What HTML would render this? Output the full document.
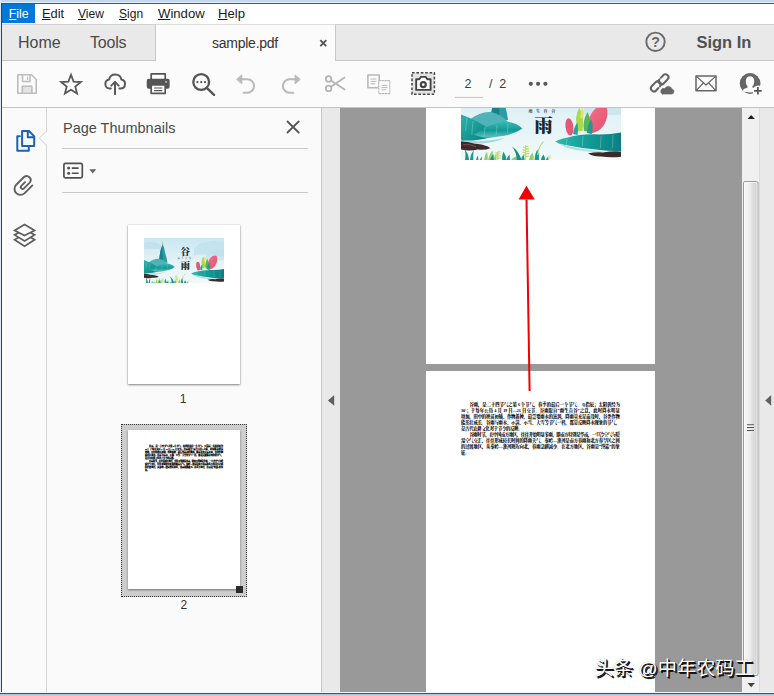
<!DOCTYPE html>
<html lang="en">
<head>
<meta charset="utf-8">
<title>sample.pdf - Adobe Acrobat Reader DC</title>
<style>
*{box-sizing:border-box;margin:0;padding:0}
html,body{width:774px;height:696px;overflow:hidden;background:#fff}
body{position:relative;font-family:"Liberation Sans","Noto Sans CJK SC",sans-serif;color:#333}
.abs{position:absolute}
#win-top{left:0;top:0;width:774px;height:3px;background:linear-gradient(#bfd7ef 0,#c3daf1 1.8px,#e3eef8 2px,#e8f1f9 3px)}
#win-topline{left:1px;top:3px;width:773px;height:1px;background:#4d545c}
#win-left{left:0;top:0;width:1px;height:696px;background:#dfe8f3}
#win-leftline{left:1px;top:3px;width:1px;height:691px;background:#3f4246}
#win-bottom{left:0;top:692px;width:774px;height:4px;background:linear-gradient(#f2f5f9 0,#f2f5f9 1px,#46505f 1px,#46505f 2px,#a9bfd8 2px,#c3d4e6 4px)}
/* menu */
#menubar{left:2px;top:4px;width:772px;height:20px;background:#fff}
.mi{position:absolute;top:-0.5px;height:20px;line-height:20px;font-size:13.4px;transform-origin:0 50%;color:#1a1a1a;white-space:nowrap}
.mi u{text-decoration:underline;text-underline-offset:1px}
#m-file{left:0;width:36px;color:#fff;padding-left:7.4px}
#m-file-bg{left:2px;top:4px;width:33px;height:19px;background:#0078d7}
/* tab bar */
#tabbar{left:2px;top:24px;width:772px;height:37px;background:#e9e9e9;border-bottom:1px solid #c6c6c6;box-shadow:inset 0 1px 0 #d2d2d2}
.tb{position:absolute;font-size:16px;color:#4a4a4a;white-space:nowrap;line-height:18px}
#tab-doc{left:153px;top:0;width:181px;height:38px;background:#fbfbfb;border-left:1px solid #c8c8c8;border-right:1px solid #c8c8c8;box-shadow:inset 0 1px 0 #dedede}
/* toolbar */
#toolbar{left:2px;top:61px;width:772px;height:47px;z-index:3;background:#fbfbfb;border-bottom:1px solid #c4c4c4}
/* left nav */
#navstrip{left:2px;top:107px;width:45px;height:585px;background:#fafafa;border-right:1px solid #d4d4d4}
#panel{left:47px;top:107px;width:275px;height:585px;background:#fafafa;border-right:1px solid #c8c8c8}
#divider{left:322px;top:107px;width:18px;height:585px;background:#e9e9e9}
#doc{left:340px;top:107px;width:402px;height:585px;background:#999}
#vscroll{left:742px;top:107px;width:18px;height:585px;background:#f0f0f0;border-right:1px solid #dcdcdc}
#rightpane{left:760px;top:107px;width:14px;height:585px;background:#e9e9e9}
.page{position:absolute;background:#fff}
.ptext{width:158.6px;font-family:"Liberation Serif","Noto Serif CJK SC",serif;font-size:4.3px;letter-spacing:-.2px;color:#000;font-weight:900}
.ptext .l{height:6.025px;line-height:6.025px;white-space:nowrap;text-align:justify;text-align-last:justify;text-justify:inter-character;overflow:visible}
.ptext .l.i{padding-left:8.4px;letter-spacing:-.4px}
.ptext .l.e{text-align-last:left}
#t2text{transform:scale(.4913);transform-origin:0 0;font-weight:900;-webkit-text-stroke:.3px #000}
#wm{left:594.6px;top:656.6px;font-family:"Liberation Sans","Noto Sans CJK SC",sans-serif;font-size:19.2px;line-height:24px;color:#fff;white-space:nowrap;text-shadow:1px 1px 0 #111,1.7px 1.7px .6px #1a1a1a,0 0 1px rgba(0,0,0,.35)}
</style>
</head>
<body>
<svg width="0" height="0" style="position:absolute">
  <defs>
    <linearGradient id="sky" x1="0" y1="0" x2="0" y2="1"><stop offset="0" stop-color="#c9e6f1"/><stop offset=".5" stop-color="#e2f2f6"/><stop offset="1" stop-color="#f1f9f9"/></linearGradient>
    <linearGradient id="teal1" x1="0" y1="0" x2="1" y2="1"><stop offset="0" stop-color="#2fb3ad"/><stop offset=".6" stop-color="#14958f"/><stop offset="1" stop-color="#0d7f80"/></linearGradient>
    <linearGradient id="teal2" x1="0" y1="0" x2="0" y2="1"><stop offset="0" stop-color="#35bdb2"/><stop offset=".55" stop-color="#119a96"/><stop offset="1" stop-color="#5fc5c4"/></linearGradient>
    <linearGradient id="teal3" x1="0" y1="0" x2="1" y2="0"><stop offset="0" stop-color="#2db9ae"/><stop offset=".5" stop-color="#139b95"/><stop offset="1" stop-color="#0b7f82"/></linearGradient>
    <linearGradient id="pink" x1="0" y1="0" x2="1" y2="1"><stop offset="0" stop-color="#f4708a"/><stop offset="1" stop-color="#e2506e"/></linearGradient>
    <symbol id="banner" viewBox="0 0 160 89" preserveAspectRatio="none">
      <rect width="160" height="89" fill="url(#sky)"/>
      <!-- distant mountains -->
      <path d="M0 10Q10 5 18 9Q26 6 32 14L36 22H0Z" fill="#bfdfeb" opacity=".8"/>
      <path d="M100 22Q112 6 124 10Q136 2 148 8Q155 5 160 9V38Q130 30 100 34Z" fill="#b9deea" opacity=".6"/>
      <path d="M128 30Q140 20 150 24L160 22V44H120Z" fill="#b9deea" opacity=".5"/>
      <!-- pinnacle -->
      <path d="M36.2 5.5Q38 8 38.6 13L36 14.5Q35 9 36.2 5.5Z" fill="#d9c98a"/>
      <path d="M37 12Q41.5 20 42.5 30Q46 40 47 49L28 49Q31 42 31.5 34Q33 22 37 12Z" fill="#2b9ea4"/>
      <path d="M37 14Q36 26 38 36Q39 44 37 49L28 49Q31 42 31.5 34Q33 22 37 14Z" fill="#1b8189"/>
      <!-- left hills -->
      <path d="M8 49Q20 40 30 41Q40 43 48 52L20 58Z" fill="#4fb3b8"/>
      <path d="M0 43.5Q13 48 27 57L31 66Q15 70.5 0 69.5Z" fill="url(#teal1)"/>
      <path d="M13 63.5Q29 52 44 50.4Q55 51 61.4 57.4Q52 64.2 38 65.6Q24 68.6 13 63.5Z" fill="url(#teal2)"/>
      <path d="M2 69Q20 72 44 67Q34 71.5 20 72.5Q8 73 2 69Z" fill="#8fd3d6" opacity=".8"/>
      <!-- left rock -->
      <path d="M0 70.2Q7 70.6 13 72.6Q21 73 27 75.4L29.4 77.2Q24 79.4 17 78.6Q8 80.4 0 78.4Z" fill="#3d2b2c"/>
      <path d="M2 73.6Q9 73 15 75.6" stroke="#8a5a58" stroke-width=".8" fill="none"/>
      <!-- right leaves -->
      <path d="M128.6 62.6Q124.6 48 133 39Q139 33 145.4 35.6Q148.4 45 142.6 54.6Q137.4 62 128.6 62.6Z" fill="url(#pink)"/>
      <path d="M117 60Q112.5 46 118.4 36.6Q123.6 47 121.4 60Z" fill="#a9d94c"/>
      <path d="M119 47Q119.6 40 121.6 36.6Q123.2 41 122.6 47Z" fill="#dfe468"/>
      <path d="M123 60Q121 50 126.6 41Q131 50 128.6 61Z" fill="#56b65c"/>
      <path d="M126 62Q126 54 130.4 48Q132.6 55 131 63Z" fill="#1f9c8c"/>
      <ellipse cx="108.4" cy="55.8" rx="3.9" ry="8.7" transform="rotate(-7 108.4 55.8)" fill="#e5577a"/>
      <path d="M112 63Q113 56 116.4 51.6Q117.6 58 116.6 64Z" fill="#2aa493"/>
      <!-- right hill -->
      <path d="M94.2 70.4Q100 67.6 107 66.4Q120 62.6 139 63.4Q150 63.4 160 61.4V80Q148 80.4 139 79Q120 77.4 103 73.8Q97 72.6 94.2 70.4Z" fill="url(#teal3)"/>
      
      <path d="M98 72.8Q118 78.6 150 81.4Q124 81.6 106 77Z" fill="#9ad8da" opacity=".8"/>
      <!-- right rock -->
      <path d="M127 82.6Q134 80.6 142 81.4Q152 79.8 160 80.6V85.8Q150 87 140 85.6Q132 85.8 127 82.6Z" fill="#3a2a2c"/>
      <!-- rain -->
      <g stroke="#e9fbfb" stroke-width=".5" opacity=".5"><path d="M6 46L4.6 60M12 50L10.8 64M24 56L23 66M36 54L35.2 64M47 53L46.4 62M106 68L105.4 75M122 65L121.4 75M140 65L139.4 77M152 64L151.6 77"/></g>
      <!-- grass -->
      <g>
        <path d="M4 89Q5 82 3.6 78.6Q7.4 82 8 89ZM9 89Q9.6 83 12.6 79Q12 84.6 12.4 89Z" fill="#1b9a8a"/>
        <path d="M15 89Q15.4 86 17 84.4Q17 87 17.6 89ZM19 89Q19.6 86.6 20.6 85.4L21 89Z" fill="#25a08c"/>
        <path d="M23 89Q23.6 83.4 26 80.4Q27 85 26.8 89ZM27 89Q29 82 31.4 79.4Q32.4 84.6 31.8 89ZM32 89Q33 85 35.4 82.4L35.4 89Z" fill="#8fd364"/>
        <path d="M29 89Q30.4 85 32.4 83L33 89Z" fill="#1b9a8a"/>
        <path d="M36.6 89V80.4M36.6 81.6L39.4 80.6M36.6 83.6L39.6 82.6M36.6 85.6L39.6 84.6M36.6 87.6L39.4 86.8M36.6 82.4L34.4 81.6M36.6 84.4L34.2 83.6M36.6 86.4L34.2 85.8" stroke="#c6da68" stroke-width="1.1" fill="none"/>
        <path d="M41 89Q41 83.6 42.4 80.6Q45 84.4 45.4 89ZM45.4 89Q46.4 85.6 48.6 83.4L49 89Z" fill="#1b9a8a"/>
        <path d="M50 89Q52 86.4 55 85.6L56 89Z" fill="#8fd364"/>
        <path d="M55.6 89Q55.6 81 51 75.4Q57.6 79.6 60.6 89Z" fill="#16938a"/>
        <path d="M60 89Q60.8 85 63 83L63.6 89Z" fill="#27a28e"/>
        <path d="M64.6 89V74M64.6 76L67.4 75M64.6 78.4L67.8 77.4M64.6 80.8L68 79.8M64.6 83.2L68 82.4M64.6 85.6L68 85M64.6 77L62 76M64.6 79.4L61.6 78.6M64.6 81.8L61.6 81.2M64.6 84.2L61.6 83.8" stroke="#c2dc66" stroke-width="1.2" fill="none"/>
        <path d="M68 89Q69 84 71.6 81.6Q73 85 72.6 89Z" fill="#8fd364"/>
        <path d="M73.6 89Q74 82 76.4 78.6Q78.4 84 78 89Z" fill="#1b9a8a"/>
        <path d="M76.4 84Q77.6 75 82.6 70.6" stroke="#9ad86a" stroke-width="1" fill="none"/>
        <path d="M80 89Q80.6 85 82.6 83.4Q84 86 84.2 89ZM85 89L86.4 85.4L87.6 89Z" fill="#1b9a8a"/>
        <path d="M86.6 86.4L89.4 84.6M87 87.4L90 86.6" stroke="#a6dc6c" stroke-width=".8"/>
      </g>
      <!-- title -->
      <text x="82.6" y="33.4" text-anchor="middle" font-family="'Noto Serif CJK SC','Noto Sans CJK SC',serif" font-weight="900" font-size="19" fill="#18343a">谷</text>
      <text x="82.6" y="42.2" text-anchor="middle" font-family="'Noto Serif CJK SC','Noto Sans CJK SC',serif" font-weight="700" font-size="4" letter-spacing="3.6" fill="#22424a">雨生百谷</text>
      <text x="82.6" y="61.4" text-anchor="middle" font-family="'Noto Serif CJK SC','Noto Sans CJK SC',serif" font-weight="900" font-size="18.5" fill="#16282e">雨</text>
    </symbol>
  </defs>
</svg>
<div class="abs" id="win-top"></div>
<div class="abs" id="win-left"></div>
<div class="abs" id="win-topline"></div>
<div class="abs" id="win-leftline"></div>

<div class="abs" id="menubar"><div class="abs" id="m-file-bg" style="left:0;top:0"></div>
  <div class="mi" id="m-file" style="transform:scaleX(.92)"><u>F</u>ile</div>
  <div class="mi" style="left:40.4px;transform:scaleX(.96)"><u>E</u>dit</div>
  <div class="mi" style="left:76.2px;transform:scaleX(.9)"><u>V</u>iew</div>
  <div class="mi" style="left:117px;transform:scaleX(.9)"><u>S</u>ign</div>
  <div class="mi" style="left:156px;transform:scaleX(.98)"><u>W</u>indow</div>
  <div class="mi" style="left:216.4px;transform:scaleX(.98)"><u>H</u>elp</div>
</div>

<div class="abs" id="tabbar">
  <div class="tb" style="left:16px;top:9.6px">Home</div>
  <div class="tb" style="left:88px;top:9.6px;letter-spacing:-.2px">Tools</div>
  <div class="abs" id="tab-doc">
    <div class="tb" style="left:56px;top:10px;font-size:14px;letter-spacing:-0.25px;color:#333">sample.pdf</div>
    <svg class="abs" style="left:160px;top:12px" width="14" height="14" viewBox="0 0 14 14"><title>×</title><path d="M4.3 4.1L10.3 10.1M10.3 4.1L4.3 10.1" stroke="#555" stroke-width="1.9" fill="none"/></svg>
  </div>
  <svg class="abs" style="left:642px;top:6px" width="24" height="24" viewBox="0 0 24 24"><circle cx="11.5" cy="11.8" r="9.2" fill="none" stroke="#6a6a6a" stroke-width="1.9"/><text x="11.6" y="16.9" text-anchor="middle" font-family="Liberation Sans, sans-serif" font-weight="bold" font-size="14.2" fill="#666">?</text></svg>
  <div class="tb" style="left:694.4px;top:9px;font-size:16.5px;font-weight:bold;color:#505050">Sign In</div>
</div>

<div class="abs" id="toolbar">
<svg class="abs" style="left:0;top:0" width="772" height="46" viewBox="2 61 772 46" fill="none" stroke-linecap="round" stroke-linejoin="round">
  <!-- save (disabled) -->
  <g stroke="#bdbdbd" stroke-width="1.6">
    <path d="M17.8 74.8H31.5L36.2 79.5V93.2H17.8Z"/>
    <path d="M22.5 75V81.5H30V75"/>
    <path d="M27.5 77V79.5" stroke-width="1.2"/>
    <rect x="22.3" y="86.2" width="9.6" height="7" fill="#e4e4e4"/>
  </g>
  <!-- star -->
  <path d="M71.0 74.8 L73.6 81.6 L80.9 82.0 L75.3 86.6 L77.1 93.6 L71.0 89.7 L64.9 93.6 L66.7 86.6 L61.1 82.0 L68.4 81.6Z" stroke="#595959" stroke-width="1.8" stroke-linejoin="miter"/>
  <!-- cloud upload -->
  <g stroke="#5a5a5a" stroke-width="2">
    <path d="M110.8 88.6H109.6A4.6 4.6 0 0 1 109.1 79.5A6.3 6.3 0 0 1 121.4 79.6A4.55 4.55 0 0 1 120.6 88.6H119.4"/>
    <path d="M115 94.3V82.3M111.3 85.6L115 81.9L118.7 85.6"/>
  </g>
  <!-- printer -->
  <g stroke="#555" stroke-width="1.7">
    <rect x="151.2" y="73.8" width="14" height="6" fill="#fff"/>
    <rect x="147.6" y="79.6" width="21.2" height="8.4" rx="1.2" fill="#555"/>
    <rect x="151.2" y="84.8" width="14" height="8.6" fill="#fff"/>
    <path d="M154.5 88H162M154.5 90.6H162" stroke-width="1.1"/>
    <path d="M165.6 81.8H166.6" stroke="#ddd" stroke-width="1.2"/>
  </g>
  <!-- magnifier -->
  <g stroke="#555">
    <circle cx="201.2" cy="82" r="7.9" stroke-width="2.3"/>
    <path d="M207.3 88.3L214 94.8" stroke-width="2.4"/>
    <g fill="#555" stroke="none"><circle cx="197.4" cy="82.1" r="1.15"/><circle cx="201.2" cy="82.1" r="1.15"/><circle cx="205" cy="82.1" r="1.15"/></g>
  </g>
  <!-- undo / redo (disabled) -->
  <g stroke="#b9b9b9" stroke-width="2">
    <path d="M241.5 79.2H247.3A6.7 6.7 0 0 1 247.3 92.7H243.6"/>
    <path d="M236.9 79.2L241.8 74.9V83.5Z" fill="#b9b9b9" stroke-width="1"/>
    <path d="M295.4 79.2H289.6A6.7 6.7 0 0 0 289.6 92.7H293.3"/>
    <path d="M300 79.2L295.1 74.9V83.5Z" fill="#b9b9b9" stroke-width="1"/>
  </g>
  <!-- scissors (disabled) -->
  <g stroke="#b5b5b5" stroke-width="1.8">
    <circle cx="328.6" cy="79" r="2.8"/><circle cx="328.6" cy="88.4" r="2.8"/>
    <path d="M331 80.6L344.6 89.6M331 86.8L344.6 77.6"/>
  </g>
  <!-- copy text (disabled) -->
  <g stroke="#b8b8b8">
    <rect x="367.9" y="75" width="11.3" height="12.8" stroke-width="1.6"/>
    <path d="M371 79H376M371 81.4H376M371 83.8H375" stroke-width="1"/>
    <rect x="378.8" y="80.6" width="11" height="13" stroke-width="1.1" stroke-dasharray="1.6 1.4" fill="#fbfbfb"/>
    <path d="M382 85.4H387M382 87.6H387M382 89.8H386" stroke-width="1"/>
  </g>
  <!-- snapshot -->
  <g stroke="#444">
    <rect x="412" y="72.8" width="22.4" height="21.4" fill="#e3e3e3" stroke-width="1.5" stroke-dasharray="2.6 1.8" stroke-linecap="butt"/>
    <path d="M416.2 79.2H419.3L420.8 76.9H425.8L427.3 79.2H430.6V89.9H416.2Z" fill="#fdfdfd" stroke-width="1.9"/>
    <circle cx="423.3" cy="84.6" r="2.5" stroke-width="2.2" fill="#fdfdfd"/>
  </g>
  <!-- page number -->
  <path d="M455 97.4H483" stroke="#c2c2c2" stroke-width="1" stroke-linecap="butt"/>
  <text x="464.6" y="88" font-family="Liberation Sans, sans-serif" font-size="12.5" fill="#3c3c3c" stroke="none">2</text>
  <text x="489" y="88" font-family="Liberation Sans, sans-serif" font-size="12.5" fill="#3c3c3c" stroke="none">/</text>
  <text x="499.2" y="88" font-family="Liberation Sans, sans-serif" font-size="12.5" fill="#3c3c3c" stroke="none">2</text>
  <g fill="#5a5a5a" stroke="none"><circle cx="530.8" cy="83.8" r="2.1"/><circle cx="538.1" cy="83.8" r="2.1"/><circle cx="545.4" cy="83.8" r="2.1"/></g>
  <!-- link + cloud -->
  <g stroke="#666" stroke-width="2.1">
    <path d="M658.35 88.01L656.10 90.42A3.0 3.0 0 0 1 651.71 86.33L655.40 82.38A3.0 3.0 0 0 1 659.92 86.33"/>
    <path d="M661.00 77.64L663.25 75.23A3.0 3.0 0 0 1 667.64 79.32L663.95 83.27A3.0 3.0 0 0 1 659.43 79.32"/>
    <path d="M662.6 94.1H671.6A2.6 2.6 0 0 0 672 89A3.9 3.9 0 0 0 664.8 88.6A2.8 2.8 0 0 0 662.6 94.1Z" fill="#666" stroke-width="0.6"/>
  </g>
  <!-- mail -->
  <g stroke="#666" stroke-width="1.5">
    <rect x="696" y="76" width="20" height="14.8"/>
    <path d="M696.4 76.4L706 85L715.6 76.4M696.4 90.4L703.3 83M715.6 90.4L708.7 83" stroke-width="1.2"/>
  </g>
  <!-- user plus -->
  <g>
    <circle cx="750.1" cy="83.5" r="10.4" fill="#666" stroke="none"/>
    <path d="M742.6 91.2C743 89 745.4 88.5 747.5 87.6V86.2C746 84.8 745.6 82.4 745.9 80.2C746.2 77.8 747.8 76.3 750 76.3C752.2 76.3 753.8 77.8 754.1 80.2C754.4 82.4 754 84.8 752.5 86.2V87.6C754.6 88.5 757 89 757.4 91.2C755.6 91.9 753 92.4 750 92.4C747 92.4 744.4 91.9 742.6 91.2Z" fill="#fbfbfb" stroke="none"/>
    <circle cx="758.2" cy="91" r="5.6" fill="#fbfbfb" stroke="none"/>
    <path d="M757.9 87V94.6M754.1 90.8H761.7" stroke="#555" stroke-width="1.7" stroke-linecap="butt"/>
  </g>
</svg>
</div>

<div class="abs" id="navstrip">
  <svg class="abs" style="left:0;top:0" width="46" height="160" viewBox="2 107 46 160" fill="none" stroke-linejoin="round" stroke-linecap="round">
    <!-- pages (active) -->
    <g stroke="#1c61b7" stroke-width="2">
      <path d="M22.1 131H29L34.2 136.4V145.9H22.1Z"/>
      <path d="M27.8 131.2V137.2H34"/>
      <path d="M19.8 136.2H17.3V150.7H28.8V147.6"/>
    </g>
    <!-- notch -->
    <path d="M46.5 131L39.3 138.1L46.5 145.2" stroke="#d0d0d0" stroke-width="1"/>
    <path d="M46.5 131.8V144.4" stroke="#fafafa" stroke-width="1.4" stroke-linecap="butt"/>
    <!-- paperclip -->
    <path d="M32.4 185.4L24.4 193.4A5.95 5.95 0 0 1 16 185L24 177A4.05 4.05 0 0 1 29.7 182.7L24 188.4A1.85 1.85 0 0 1 21.35 185.8L25 182.1" stroke="#606060" stroke-width="1.9"/>
    <!-- layers -->
    <g stroke="#5e5e5e" stroke-width="1.7" stroke-linejoin="miter">
      <path d="M24.55 224.4L34.6 230.4L24.55 235.6L14.6 230.4Z"/>
      <path d="M18.4 232.8L14.6 234.9L24.55 240.9L34.6 234.9L30.8 232.8"/>
      <path d="M18.4 237.6L14.6 239.7L24.55 246.3L34.6 239.7L30.8 237.6"/>
    </g>
  </svg>
</div>
<div class="abs" id="panel">
  <div class="abs" style="left:16.2px;top:12.2px;font-size:15px;line-height:17px;color:#4a4a4a;white-space:nowrap;transform:scaleX(.965);transform-origin:0 50%">Page Thumbnails</div>
  <svg class="abs" style="left:232px;top:8px" width="24" height="24" viewBox="279 115 24 24"><title>Close</title><path d="M287.5 121.5L298.7 132.5M298.7 121.5L287.5 132.5" stroke="#555" stroke-width="1.8" stroke-linecap="round" fill="none"/></svg>
  <div class="abs" style="left:15px;top:41px;width:246px;height:1px;background:#c9c9c9"></div>
  <svg class="abs" style="left:13px;top:52px" width="40" height="24" viewBox="60 159 40 24" fill="none"><title>Options</title>
    <rect x="63.9" y="163.4" width="18.4" height="14.4" rx="1.6" stroke="#505050" stroke-width="1.7"/>
    <circle cx="68.6" cy="168.1" r="1.5" fill="#505050"/><circle cx="68.6" cy="173.2" r="1.5" fill="#505050"/>
    <path d="M71.8 168.1H78.6M71.8 173.2H78.6" stroke="#505050" stroke-width="1.6"/>
    <path d="M89.3 169.2H96.3L92.8 173.6Z" fill="#666"/>
  </svg>
  <div class="abs" style="left:15px;top:85px;width:246px;height:1px;background:#c9c9c9"></div>
  <!-- thumbnail 1 -->
  <div class="abs" id="th1" style="left:81px;top:118px;width:112px;height:159px;background:#fff;box-shadow:0 1px 2px rgba(0,0,0,.45),0 0 1px rgba(0,0,0,.25)"><svg class="abs" style="left:16px;top:13px" width="80" height="45"><use href="#banner" width="80" height="45"/></svg></div>
  <div class="abs" style="left:121px;top:285px;width:30px;text-align:center;font-size:12px;color:#333">1</div>
  <!-- thumbnail 2 (selected) -->
  <div class="abs" id="th2sel" style="left:74px;top:317px;width:126px;height:173px;background:#cdcdcd;outline:1px dotted #333;outline-offset:-1px"></div>
  <div class="abs" id="th2" style="left:81px;top:323px;width:112px;height:159px;background:#fff;box-shadow:0 1px 2px rgba(0,0,0,.45)"><div class="abs ptext" id="t2text" style="left:17.2px;top:15px"><div class="l i">谷雨，是二十四节气之第 6 个节气，春季的最后一个节气。斗指辰；太阳黄经为</div><div class="l">30°；于每年公历 4 月 19 日—21 日交节。谷雨取自“雨生百谷”之意，此时降水明显</div><div class="l">增加，田中的秧苗初插、作物新种，最需要雨水的滋润，降雨量充足而及时，谷类作物</div><div class="l">能茁壮成长。谷雨与雨水、小满、小雪、大雪等节气一样，都是反映降水现象的节气，</div><div class="l e">是古代农耕文化对于节令的反映。</div><div class="l i">谷雨时节，在中国南方地区，往往开始明显多雨，即南方特别是华南，一旦冷空气与暖</div><div class="l">湿空气交汇，往往形成较长时间的降雨天气。秦岭—淮河是南方春雨和北方春旱区之间</div><div class="l">的过渡地区，从秦岭—淮河附近向北，春雨急剧减少。在北方地区，谷雨是“终霜”的象</div><div class="l e">征。</div></div></div>
  <div class="abs" style="left:189px;top:479px;width:7px;height:7px;background:#2b2b2b"></div>
  <div class="abs" style="left:121.8px;top:491px;width:30px;text-align:center;font-size:12px;color:#333">2</div>
</div>
<div class="abs" id="divider">
  <svg class="abs" style="left:4px;top:286px" width="10" height="14" viewBox="0 0 10 14"><path d="M8.2 2.1V12.7L1.9 7.4Z" fill="#606060"/></svg>
</div>
<div class="abs" id="doc" style="overflow:hidden">
  <div class="page" style="left:86.4px;top:0;width:228.3px;height:257.3px;overflow:hidden">
    <svg class="abs" style="left:34.6px;top:-36px" width="160" height="89"><use href="#banner" width="160" height="89"/></svg>
  </div>
  <div class="page" style="left:86.4px;top:264px;width:228.3px;height:321px">
    <div class="abs ptext" id="p2text" style="left:34.6px;top:30.6px"><div class="l i">谷雨，是二十四节气之第 6 个节气，春季的最后一个节气。斗指辰；太阳黄经为</div><div class="l">30°；于每年公历 4 月 19 日—21 日交节。谷雨取自“雨生百谷”之意，此时降水明显</div><div class="l">增加，田中的秧苗初插、作物新种，最需要雨水的滋润，降雨量充足而及时，谷类作物</div><div class="l">能茁壮成长。谷雨与雨水、小满、小雪、大雪等节气一样，都是反映降水现象的节气，</div><div class="l e">是古代农耕文化对于节令的反映。</div><div class="l i">谷雨时节，在中国南方地区，往往开始明显多雨，即南方特别是华南，一旦冷空气与暖</div><div class="l">湿空气交汇，往往形成较长时间的降雨天气。秦岭—淮河是南方春雨和北方春旱区之间</div><div class="l">的过渡地区，从秦岭—淮河附近向北，春雨急剧减少。在北方地区，谷雨是“终霜”的象</div><div class="l e">征。</div></div>
  </div>
  <svg class="abs" style="left:0;top:0" width="402" height="585" viewBox="340 107 402 585"><path d="M526.5 199.5L529.6 391" stroke="#f00000" stroke-width="2" fill="none"/><path d="M526.4 185.8L534.8 199.6H518.6Z" fill="#f00000"/></svg>
</div>
<div class="abs" id="vscroll">
  <svg class="abs" style="left:0;top:0" width="18" height="586" viewBox="742 107 18 586">
    <defs><linearGradient id="thg" x1="0" x2="1" y1="0" y2="0"><stop offset="0" stop-color="#f6f6f6"/><stop offset=".45" stop-color="#eeeeee"/><stop offset=".55" stop-color="#e2e2e2"/><stop offset="1" stop-color="#cfcfcf"/></linearGradient></defs>
    <path d="M751.2 114.9L754.9 119H747.5Z" fill="#1e1e1e"/>
    <rect x="743.5" y="181.5" width="14.5" height="494" rx="1.5" fill="url(#thg)" stroke="#9a9a9a" stroke-width="1"/>
    <rect x="744.5" y="182.5" width="12.5" height="492" rx="1" fill="none" stroke="#fff" stroke-opacity=".7" stroke-width="1"/>
    <path d="M747 424.8H754M747 427.7H754M747 430.6H754" stroke="#555" stroke-width="1.2"/>
    <path d="M747 425.9H754M747 428.8H754M747 431.7H754" stroke="#fff" stroke-width=".8"/>
    <path d="M751.2 687.2L754.9 683.1H747.5Z" fill="#444"/>
  </svg>
</div>
<div class="abs" id="rightpane">
  <svg class="abs" style="left:3px;top:286px" width="10" height="14" viewBox="0 0 10 14"><path d="M8.2 2.1V12.7L2.2 7.4Z" fill="#606060"/></svg>
</div>
<div class="abs" id="wm">头条 @中年农码工</div>
<div class="abs" id="win-bottom"></div>
</body>
</html>
